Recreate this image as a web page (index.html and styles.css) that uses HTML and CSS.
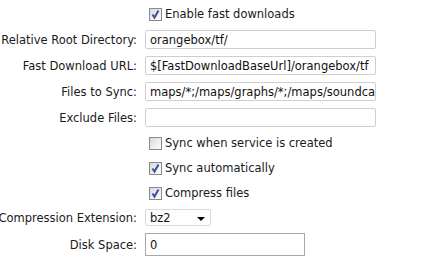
FILE: index.html
```html
<!DOCTYPE html>
<html>
<head>
<meta charset="utf-8">
<link rel="stylesheet" href="styles.css">
</head>
<body>
<div class="form">
  <div class="label"></div>
  <label class="check"><span class="box"><svg width="11" height="11" viewBox="0 0 11 11"><path d="M2.5 5.5 L4.5 8.5 L8.5 1.5" fill="none" stroke="#3d4f9f" stroke-width="2"/></svg></span>Enable fast downloads</label>

  <div class="label">Relative Root Directory:</div>
  <div class="field"><span class="text wide">orangebox/tf/</span></div>

  <div class="label">Fast Download URL:</div>
  <div class="field"><span class="text wide">$[FastDownloadBaseUrl]/orangebox/tf</span></div>

  <div class="label">Files to Sync:</div>
  <div class="field"><span class="text wide">maps/*;/maps/graphs/*;/maps/soundcache/*</span></div>

  <div class="label">Exclude Files:</div>
  <div class="field"><span class="text wide"></span></div>

  <div class="label"></div>
  <label class="check"><span class="box"></span>Sync when service is created</label>

  <div class="label"></div>
  <label class="check"><span class="box"><svg width="11" height="11" viewBox="0 0 11 11"><path d="M2.5 5.5 L4.5 8.5 L8.5 1.5" fill="none" stroke="#3d4f9f" stroke-width="2"/></svg></span>Sync automatically</label>

  <div class="label"></div>
  <label class="check"><span class="box"><svg width="11" height="11" viewBox="0 0 11 11"><path d="M2.5 5.5 L4.5 8.5 L8.5 1.5" fill="none" stroke="#3d4f9f" stroke-width="2"/></svg></span>Compress files</label>

  <div class="label">Compression Extension:</div>
  <div class="field"><span class="select">bz2<svg class="arrow" width="8" height="4" viewBox="0 0 8 4"><path d="M0 0 H8 L4 4 Z" fill="#000"/></svg></span></div>

  <div class="label">Disk Space:</div>
  <div class="field"><span class="text disk">0</span></div>
</div>
</body>
</html>
```

FILE: styles.css
```css
html, body {
  margin: 0;
  padding: 0;
  background: #fff;
  overflow: hidden;
}
.form {
  display: grid;
  grid-template-columns: 137px 1fr;
  column-gap: 8px;
  row-gap: 7px;
  padding-top: 5px;
  font-family: "DejaVu Sans", Verdana, sans-serif;
  font-size: 11.5px;
  color: #1a1a1a;
  align-items: center;
}
.label {
  justify-self: end;
  white-space: nowrap;
  width: max-content;
}
.check {
  display: flex;
  align-items: center;
  height: 18px;
  padding-left: 4px;
  gap: 3px;
  white-space: nowrap;
}
.box {
  width: 11px;
  height: 11px;
  border: 1px solid #8a8a8a;
  background: linear-gradient(135deg, #d8d8d8 0%, #f4f4f4 70%, #fff 100%);
  display: flex;
  align-items: center;
  justify-content: center;
  flex: none;
}
.field {
  display: flex;
}
.text {
  box-sizing: border-box;
  height: 19px;
  border: 1px solid #cfcfcf;
  border-radius: 2px;
  background: #fff;
  padding: 0 4px;
  display: flex;
  align-items: center;
  overflow: hidden;
  white-space: nowrap;
  color: #111;
}
.wide {
  width: 231px;
}
.disk {
  width: 160px;
  height: 23px;
  border-color: #a8a8a8;
  border-radius: 0;
}
.select {
  box-sizing: border-box;
  width: 66px;
  height: 17px;
  border: 1px solid #dadada;
  border-radius: 2px;
  padding: 0 4px;
  display: flex;
  align-items: center;
  justify-content: space-between;
  color: #111;
}
.arrow {
  margin-right: 1px;
  margin-top: 2px;
}
```
